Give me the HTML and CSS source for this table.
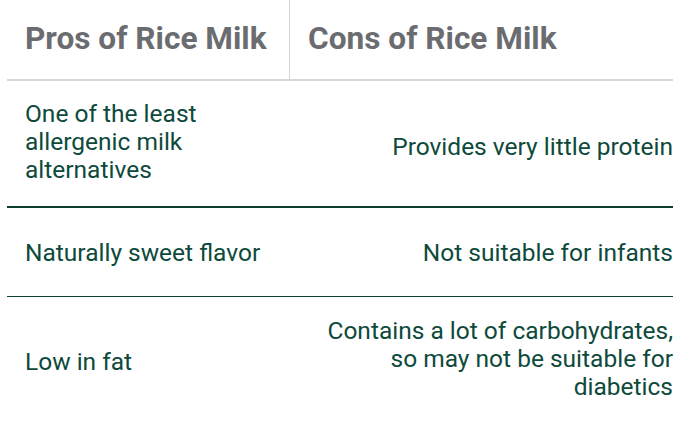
FILE: index.html
```html
<!DOCTYPE html>
<html lang="en">
<head>
<meta charset="utf-8">
<title>Pros and Cons of Rice Milk</title>
<link rel="stylesheet" href="styles.css">
</head>
<body>
<div class="compare">
  <div class="row head">
    <div class="cell pro">Pros of Rice Milk</div>
    <div class="cell con">Cons of Rice Milk</div>
  </div>
  <div class="row r1">
    <div class="cell pro">One of the least allergenic milk alternatives</div>
    <div class="cell con">Provides very little protein</div>
  </div>
  <div class="row r2">
    <div class="cell pro">Naturally sweet flavor</div>
    <div class="cell con">Not suitable for infants</div>
  </div>
  <div class="row r3">
    <div class="cell pro">Low in fat</div>
    <div class="cell con">Contains a lot of carbohydrates, so may not be suitable for diabetics</div>
  </div>
</div>
</body>
</html>
```
FILE: styles.css
```css
html, body {
  margin: 0;
  padding: 0;
  background: #ffffff;
}
body {
  font-family: Roboto, "Liberation Sans", sans-serif;
}
.compare {
  width: 666px;
  margin: 0 0 0 7px;
}
.row {
  display: grid;
  grid-template-columns: 283px 383px;
}
.cell {
  display: flex;
  align-items: center;
}
.pro {
  padding-left: 18px;
}
.con {
  justify-content: flex-end;
  text-align: right;
  padding-left: 18px;
}
.head {
  height: 79px;
  border-bottom: 2px solid #d6d6d6;
}
.head .cell {
  font-size: 31.6px;
  font-weight: 700;
  color: #6b6c70;
  padding-bottom: 2px;
}
.head .pro {
  border-right: 1px solid #d6d6d6;
}
.head .con {
  justify-content: flex-start;
  text-align: left;
}
.r1, .r2, .r3 {
  font-size: 24.5px;
  line-height: 28px;
  color: #0e4a3b;
}
.r1 {
  height: 125px;
  border-bottom: 2px solid #0d3f31;
}
.r2 {
  height: 88px;
  border-bottom: 1px solid #0d3f31;
}
.r3 {
  height: 124px;
}
.r1 .pro {
  padding-right: 60px;
  padding-bottom: 4px;
}
.r1 .con {
  padding-top: 6px;
}
.r2 .cell {
  padding-top: 2px;
}
.r3 .pro {
  padding-top: 6px;
}
```
